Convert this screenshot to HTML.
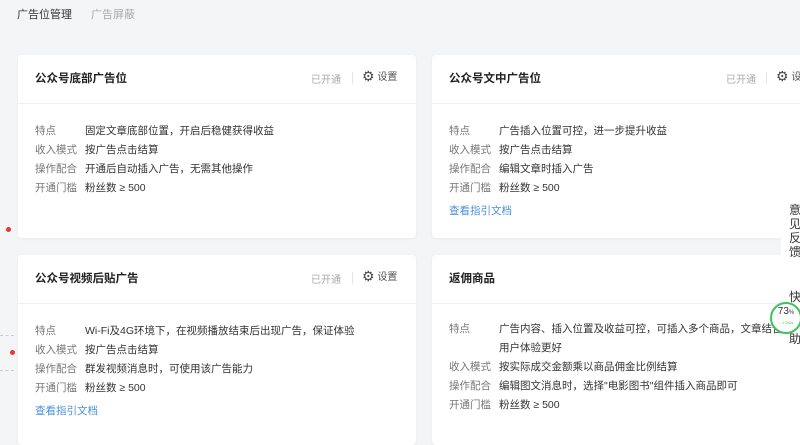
<!DOCTYPE html><html><head><meta charset="utf-8"><style>
body{margin:0;width:800px;height:426px;overflow:hidden;background:#f4f5f7;font-family:"Liberation Sans","Noto Sans CJK SC",sans-serif;position:relative}
.tab{position:absolute;top:6px;font-size:11px}
.card{position:absolute;background:#fff;border-radius:4px;box-shadow:0 1px 3px rgba(0,0,0,.05)}
.hd{height:48px;border-bottom:1px solid #eef0f2;position:relative}
.tt{position:absolute;left:17px;top:15px;font-size:11.5px;font-weight:bold;color:#222}
.st{position:absolute;top:16px;font-size:10px;color:#aaa}
.sep{position:absolute;top:17px;width:1px;height:12px;background:#e5e5e5}
.set{position:absolute;top:13px;font-size:10px;color:#555}
.set b{font-size:14px;color:#444;font-weight:normal;vertical-align:-1px}
.bd{padding:18px 0 0 17px;font-size:10.5px;color:#333;line-height:19px}
.bd span{display:inline-block;width:50px;color:#777}
.lk{color:#4a90d9;margin-top:4px;font-size:10.5px}
.dot{position:absolute;width:5px;height:5px;border-radius:50%;background:#e53935}
</style></head><body>
<div class="tab" style="left:17px;color:#333">广告位管理</div>
<div class="tab" style="left:91px;color:#aaa">广告屏蔽</div>

<div class="card" style="left:18px;top:55px;width:398px;height:183px">
<div class="hd"><div class="tt">公众号底部广告位</div><div class="st" style="left:293px">已开通</div><div class="sep" style="left:334px"></div><div class="set" style="left:344px"><b>⚙</b> 设置</div></div>
<div class="bd"><div><span>特点</span>固定文章底部位置，开启后稳健获得收益</div><div><span>收入模式</span>按广告点击结算</div><div><span>操作配合</span>开通后自动插入广告，无需其他操作</div><div><span>开通门槛</span>粉丝数 ≥ 500</div></div></div>

<div class="card" style="left:432px;top:55px;width:400px;height:183px">
<div class="hd"><div class="tt">公众号文中广告位</div><div class="st" style="left:294px">已开通</div><div class="sep" style="left:334px"></div><div class="set" style="left:344px"><b>⚙</b> 设置</div></div>
<div class="bd"><div><span>特点</span>广告插入位置可控，进一步提升收益</div><div><span>收入模式</span>按广告点击结算</div><div><span>操作配合</span>编辑文章时插入广告</div><div><span>开通门槛</span>粉丝数 ≥ 500</div><div class="lk">查看指引文档</div></div></div>

<div class="card" style="left:18px;top:255px;width:398px;height:190px">
<div class="hd"><div class="tt">公众号视频后贴广告</div><div class="st" style="left:293px">已开通</div><div class="sep" style="left:334px"></div><div class="set" style="left:344px"><b>⚙</b> 设置</div></div>
<div class="bd"><div><span>特点</span>Wi-Fi及4G环境下，在视频播放结束后出现广告，保证体验</div><div><span>收入模式</span>按广告点击结算</div><div><span>操作配合</span>群发视频消息时，可使用该广告能力</div><div><span>开通门槛</span>粉丝数 ≥ 500</div><div class="lk">查看指引文档</div></div></div>

<div class="card" style="left:432px;top:255px;width:400px;height:190px">
<div class="hd"><div class="tt">返佣商品</div></div>
<div class="bd" style="padding-top:16px"><div style="white-space:nowrap"><span>特点</span>广告内容、插入位置及收益可控，可插入多个商品，文章结合</div><div style="padding-left:50px">用户体验更好</div><div><span>收入模式</span>按实际成交金额乘以商品佣金比例结算</div><div><span>操作配合</span>编辑图文消息时，选择"电影图书"组件插入商品即可</div><div><span>开通门槛</span>粉丝数 ≥ 500</div></div></div>

<div class="dot" style="left:6px;top:227px"></div>
<div class="dot" style="left:10px;top:350px"></div>
<div style="position:absolute;left:0;top:335px;width:14px;border-top:1px dashed #ccc"></div>
<div style="position:absolute;left:0;top:370px;width:14px;border-top:1px dashed #ccc"></div>

<div style="position:absolute;left:781px;top:192px;width:19px;height:84px;background:#fff;font-size:12px;color:#333;line-height:14px;padding:11px 0 0 8px;box-sizing:border-box">意<br>见<br>反<br>馈</div>
<div style="position:absolute;left:781px;top:281px;width:19px;height:140px;background:#fff;font-size:12px;color:#333;line-height:14px;padding:9px 0 0 8px;box-sizing:border-box">快<br><br><br>助</div>
<div style="position:absolute;left:770px;top:302px;width:28px;height:28px;border-radius:50%;border:2px solid #3cc35c;background:#fff;text-align:center;font-size:10px;color:#333;line-height:16px">73<span style="font-size:6px">%</span><div style="font-size:4px;color:#3cc35c;line-height:4px">↓ 1.2K/s</div></div>
</body></html>
